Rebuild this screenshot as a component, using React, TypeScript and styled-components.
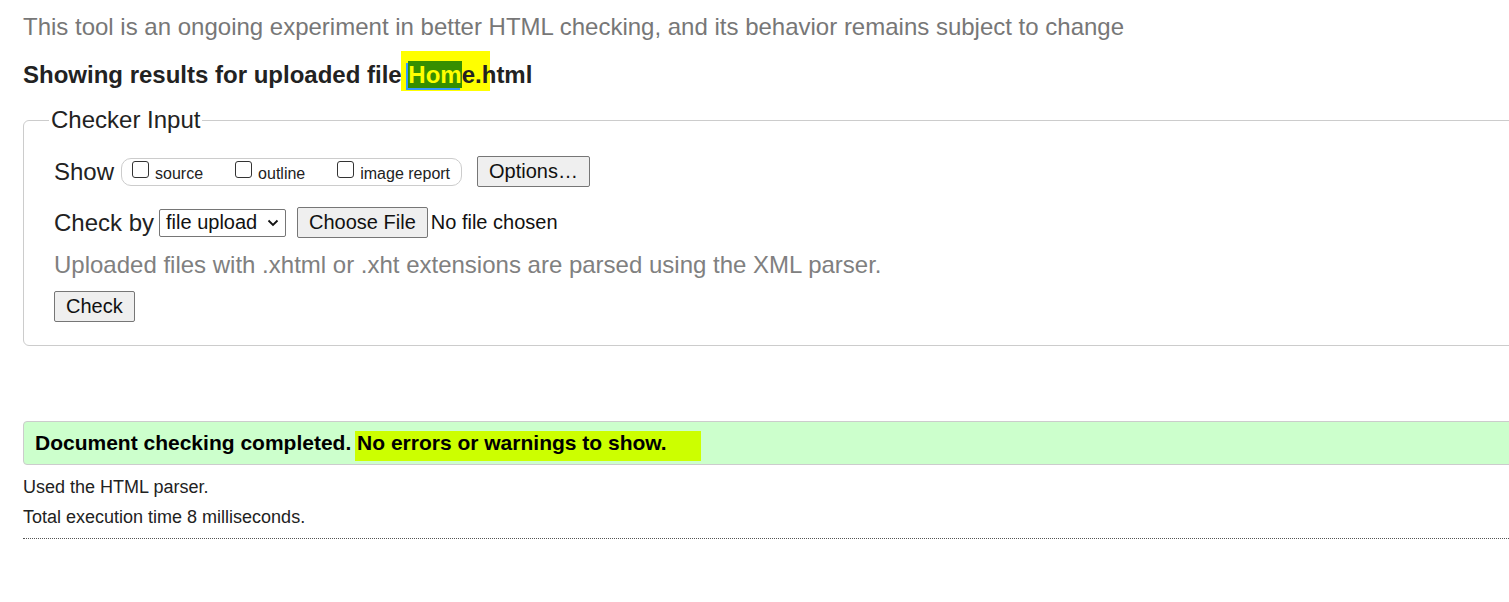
import React from 'react';
import styled, { createGlobalStyle } from 'styled-components';

const GlobalStyle = createGlobalStyle`
  html, body {
    margin: 0;
    padding: 0;
    background: #fff;
    overflow: hidden;
  }
  body {
    font-family: "Liberation Sans", Arial, sans-serif;
    color: #222;
  }
`;

const Page = styled.div`
  width: 1560px;
  padding: 14px 0 40px 23px;
`;

const Intro = styled.p`
  margin: 0;
  font-size: 24px;
  line-height: 26px;
  color: #777;
`;

const Heading = styled.h2`
  margin: 22px 0 0;
  font-size: 24px;
  line-height: 26px;
  font-weight: bold;
  color: #222;
`;

const Marker = styled.span`
  background: #ffff00;
  padding: 10px 8px 3px 7px;
  margin: 0 -8px 0 -7px;
`;

const Selected = styled.span`
  background: #368f00;
  color: #ffff00;
  box-shadow: -2px 2px 0 #3399ff;
`;

const Fieldset = styled.fieldset`
  margin: 19px 0 0;
  padding: 23px 30px 23px;
  border: 1px solid #ccc;
  border-radius: 6px;
`;

const Legend = styled.legend`
  margin-left: -5px;
  padding: 0 2px;
  font-size: 24px;
  line-height: 26px;
  color: #222;
`;

const Row = styled.div`
  display: flex;
  align-items: center;
  height: 31px;
  & + & {
    margin-top: 20px;
  }
`;

const RowLabel = styled.span<{ space: number }>`
  font-size: 24px;
  color: #222;
  margin-right: ${p => p.space}px;
`;

const CheckGroup = styled.div`
  display: flex;
  align-items: center;
  height: 26px;
  padding: 0 11px 0 10px;
  border: 1px solid #ccc;
  border-radius: 10px;
  margin: 0 15px 0 1px;
`;

const CheckItem = styled.label`
  display: flex;
  align-items: center;
  gap: 6px;
  font-size: 16px;
  color: #222;
  & + & {
    margin-left: 32px;
  }
`;

const Box = styled.span`
  box-sizing: border-box;
  width: 17px;
  height: 17px;
  border: 1px solid #333;
  border-radius: 3px;
  background: #fff;
  margin-top: -4px;
`;

const CheckText = styled.span`
  padding-top: 4px;
`;

const Button = styled.button`
  height: 31px;
  padding: 0 11px;
  font-family: "Liberation Sans", Arial, sans-serif;
  font-size: 20px;
  color: #111;
  background: #efefef;
  border: 1px solid #767676;
  border-radius: 2px;
`;

const SelectBox = styled.span`
  display: flex;
  align-items: center;
  justify-content: space-between;
  box-sizing: border-box;
  width: 127px;
  height: 28px;
  padding: 0 6px;
  font-size: 20px;
  color: #111;
  border: 1px solid #767676;
  border-radius: 2px;
  margin-right: 11px;
`;

const FileName = styled.span`
  font-size: 20px;
  color: #111;
  margin-left: 3px;
`;

const Hint = styled.p`
  margin: 14px 0 0;
  font-size: 24px;
  line-height: 26px;
  color: #808080;
`;

const ButtonRow = styled.div`
  margin-top: 13px;
`;

const Success = styled.div`
  margin-top: 75px;
  height: 42px;
  line-height: 42px;
  padding-left: 11px;
  background: #ccffcc;
  border: 1px solid #ccc;
  border-radius: 4px;
  font-size: 21px;
  font-weight: bold;
  color: #000;
`;

const GreenMarker = styled.span`
  background: #ccff00;
  padding: 0 34px 7px 2px;
  margin-left: -2px;
`;

const Details = styled.div`
  margin-top: 12px;
  font-size: 18px;
  line-height: 20px;
  color: #222;
`;

const DetailLine = styled.p`
  margin: 0;
  & + & {
    margin-top: 10px;
  }
`;

const Rule = styled.hr`
  margin: 11px 0 0;
  border: 0;
  border-top: 1px dotted #555;
  height: 0;
`;

const Chevron = () => (
  <svg width="12" height="8" viewBox="0 0 12 8" fill="none">
    <path d="M1.5 1.5 6 6l4.5-4.5" stroke="#111" strokeWidth="1.8" />
  </svg>
);

const options = ['source', 'outline', 'image report'];

export default function App() {
  return (
    <Page>
      <GlobalStyle />
      <Intro>This tool is an ongoing experiment in better HTML checking, and its behavior remains subject to change</Intro>
      <Heading>
        Showing results for uploaded file <Marker><Selected>Hom</Selected>e.</Marker>html
      </Heading>

      <Fieldset>
        <Legend>Checker Input</Legend>
        <Row>
          <RowLabel space={6}>Show</RowLabel>
          <CheckGroup>
            {options.map(o => (
              <CheckItem key={o}>
                <Box />
                <CheckText>{o}</CheckText>
              </CheckItem>
            ))}
          </CheckGroup>
          <Button>Options…</Button>
        </Row>
        <Row>
          <RowLabel space={5}>Check by</RowLabel>
          <SelectBox>
            file upload <Chevron />
          </SelectBox>
          <Button>Choose File</Button>
          <FileName>No file chosen</FileName>
        </Row>
        <Hint>Uploaded files with .xhtml or .xht extensions are parsed using the XML parser.</Hint>
        <ButtonRow>
          <Button>Check</Button>
        </ButtonRow>
      </Fieldset>

      <Success>
        Document checking completed. <GreenMarker>No errors or warnings to show.</GreenMarker>
      </Success>

      <Details>
        <DetailLine>Used the HTML parser.</DetailLine>
        <DetailLine>Total execution time 8 milliseconds.</DetailLine>
      </Details>
      <Rule />
    </Page>
  );
}
